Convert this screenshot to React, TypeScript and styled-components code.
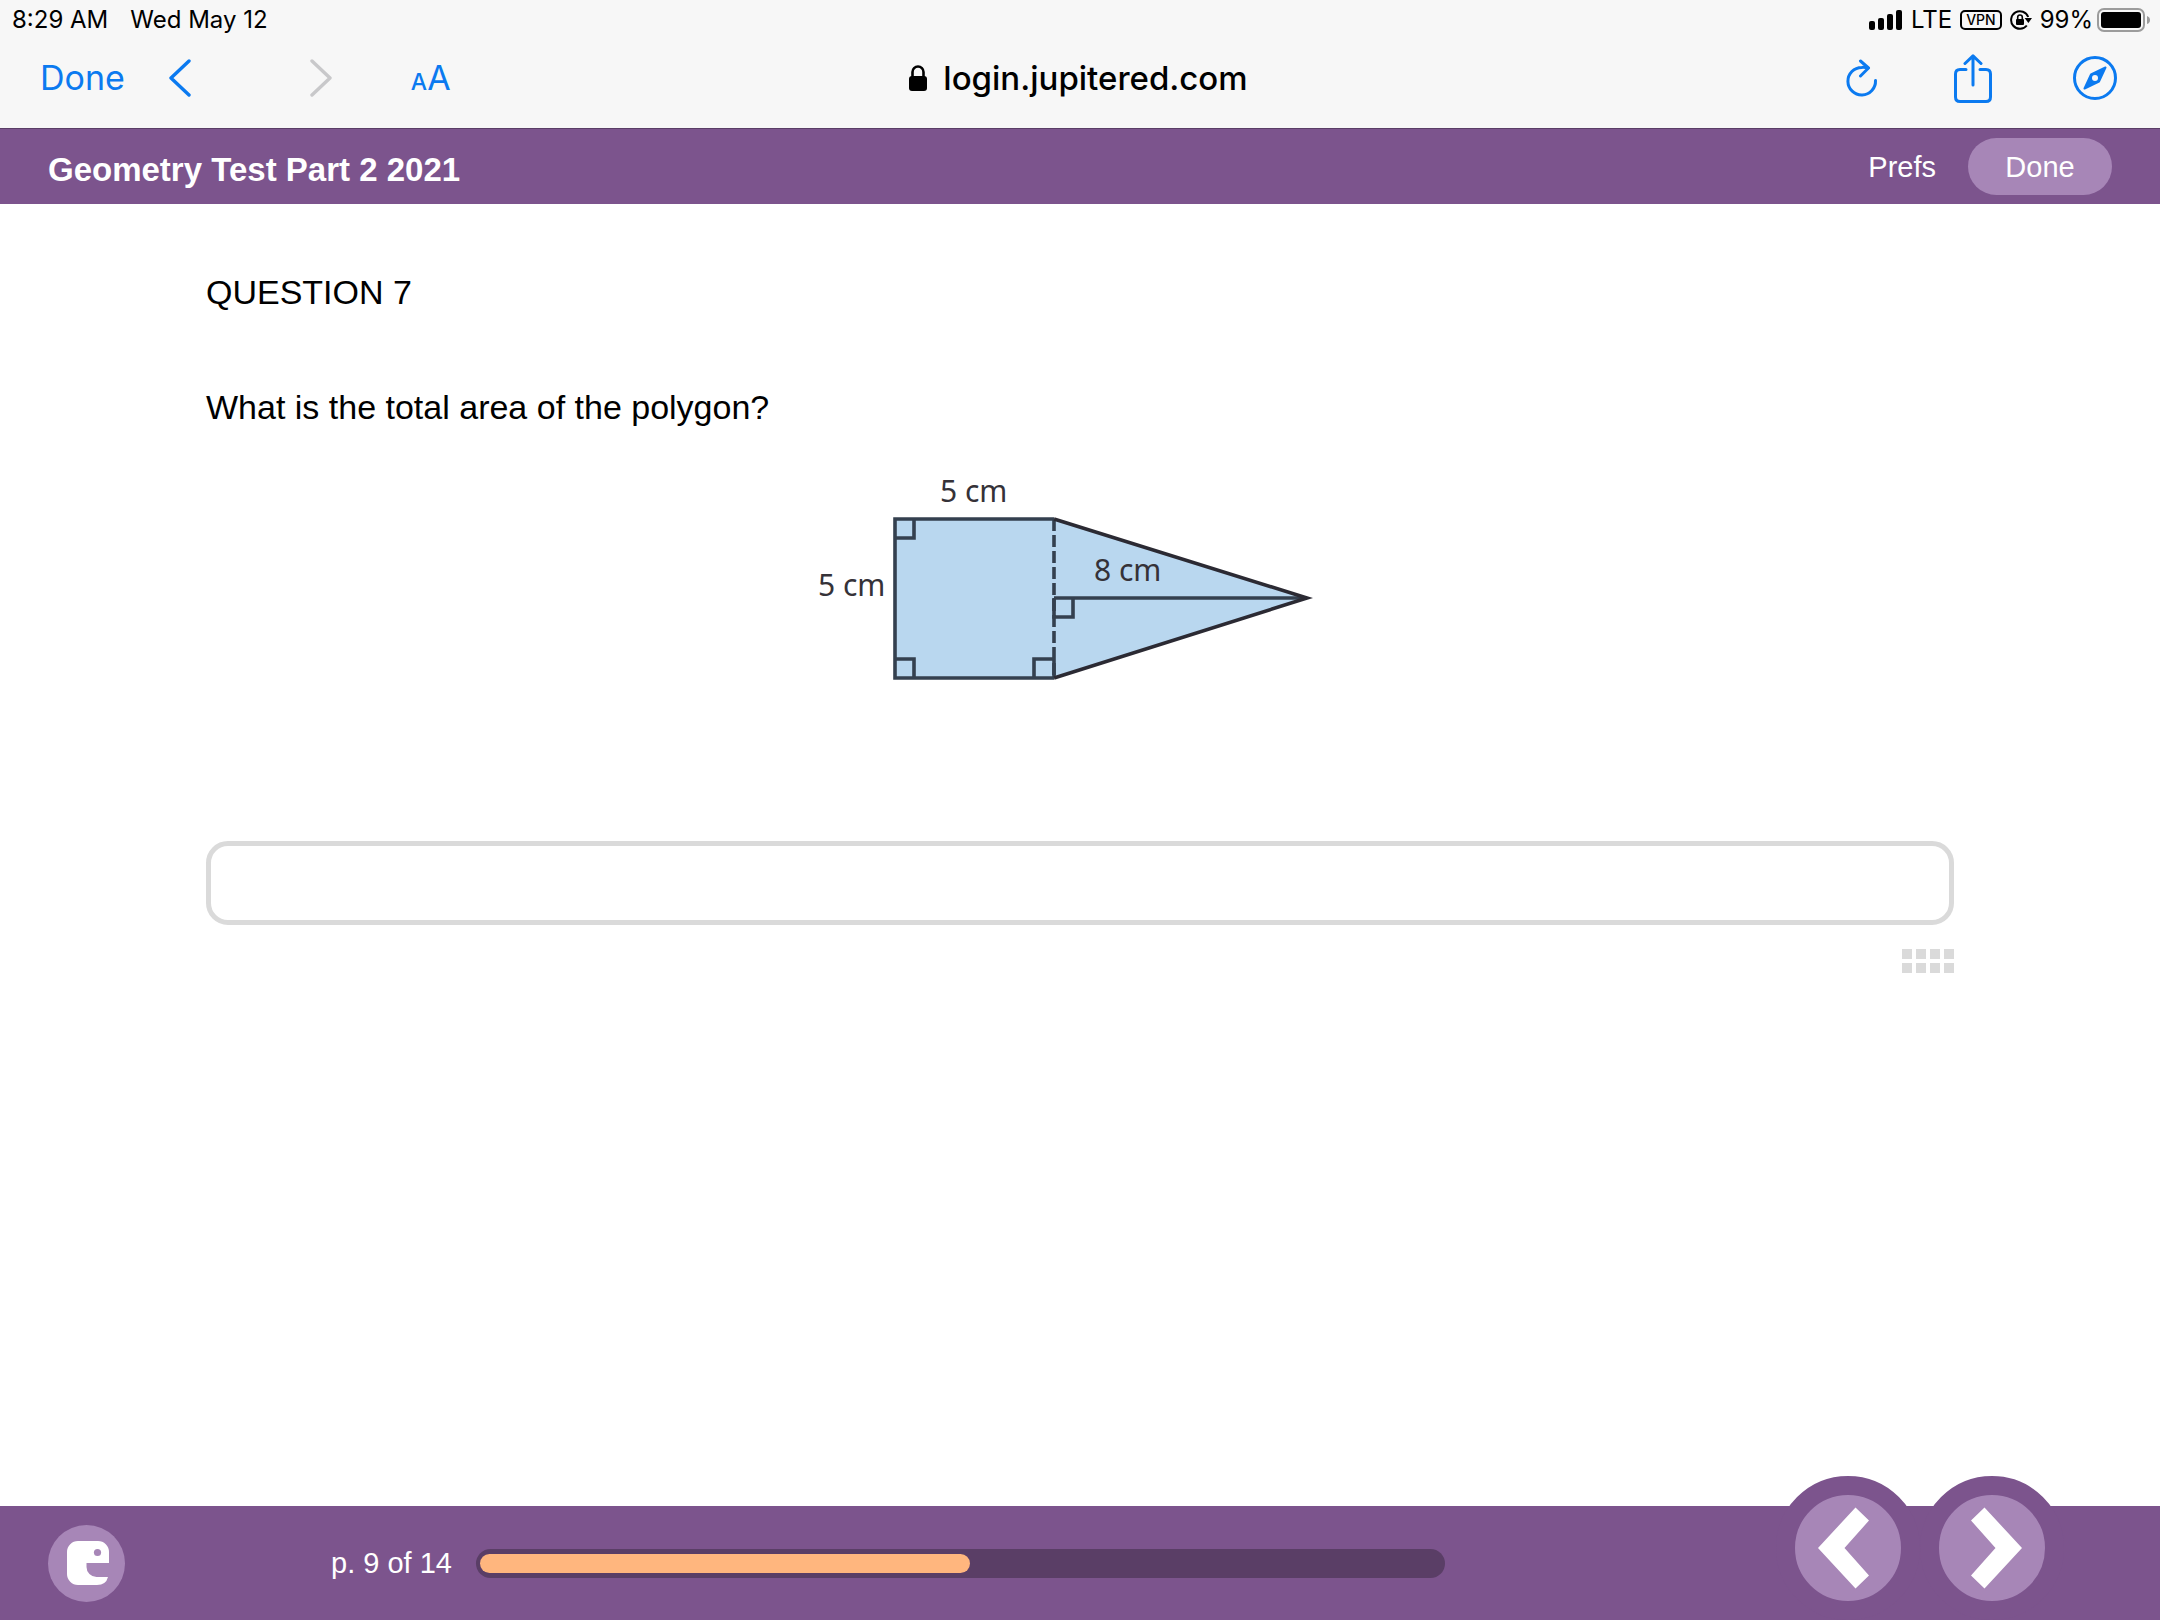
import React, { useState } from "react";
import styled, { createGlobalStyle } from "styled-components";

const color = {
  chrome: "#f7f7f7",
  blue: "#0b7af0",
  disabled: "#c8c8ca",
  purple: "#7c548d",
  lilac: "#a786b7",
  plum: "#5a3e66",
  orange: "#ffb67e",
  line: "#dadada",
};

const systemFont = `Inter, "Liberation Sans", sans-serif`;
const pageFont = `"Liberation Sans", Arial, sans-serif`;

const GlobalStyle = createGlobalStyle`
  * { box-sizing: border-box; }
  body { margin: 0; background: #fff; color: #000; font-family: ${pageFont}; }
  button { border: 0; padding: 0; background: none; font: inherit; color: inherit; cursor: pointer; }
  a { color: inherit; text-decoration: none; }
  svg { display: block; }
`;

const Page = styled.div`
  display: flex;
  flex-direction: column;
  min-height: 100vh;
`;

const BrowserChrome = styled.header`
  background: ${color.chrome};
  font-family: ${systemFont};
`;

const StatusBar = styled.div`
  display: flex;
  justify-content: space-between;
  align-items: center;
  height: 40px;
  padding: 0 10px 0 12px;
  font-size: 24px;
  line-height: 28px;
`;

const StatusGroup = styled.div<{ $gap: number }>`
  display: flex;
  align-items: center;
  gap: ${(p) => p.$gap}px;
`;

const VpnBadge = styled.span`
  display: flex;
  align-items: center;
  height: 20px;
  padding: 0 4px;
  border: 2px solid #000;
  border-radius: 5px;
  font-size: 14px;
  line-height: 16px;
  font-weight: 500;
`;

const BatteryGroup = styled.div`
  display: flex;
  align-items: center;
  gap: 4px;
`;

const Toolbar = styled.nav`
  display: grid;
  grid-template-columns: 1fr auto 1fr;
  align-items: center;
  height: 88px;
  padding: 0 43px 12px 40px;
  font-size: 34px;
  line-height: 40px;
`;

const ToolGroup = styled.div<{ $end?: boolean }>`
  display: flex;
  align-items: center;
  justify-content: ${(p) => (p.$end ? "flex-end" : "flex-start")};
`;

const ToolButton = styled.button<{ $space?: number }>`
  margin-left: ${(p) => p.$space ?? 0}px;
  color: ${color.blue};
  &:disabled {
    color: ${color.disabled};
    cursor: default;
  }
`;

const SmallLetter = styled.span`
  font-size: 23px;
  font-weight: 500;
  line-height: 24px;
`;

const Address = styled.div`
  display: flex;
  align-items: center;
  gap: 16px;
  font-size: 33px;
  font-weight: 500;
`;

const TestHeader = styled.header`
  display: flex;
  align-items: center;
  justify-content: space-between;
  height: 76px;
  padding: 0 48px;
  border-top: 1px solid ${color.plum};
  background: ${color.purple};
  color: #fff;
`;

const TestTitle = styled.h1`
  margin: 0;
  padding-top: 6px;
  font-size: 33px;
  line-height: 40px;
`;

const HeaderActions = styled.div`
  display: flex;
  align-items: center;
  gap: 32px;
  font-size: 29px;
  line-height: 32px;
`;

const Pill = styled.button`
  width: 144px;
  height: 57px;
  border-radius: 29px;
  background: ${color.lilac};
`;

const Main = styled.main`
  display: flex;
  flex: 1;
  flex-direction: column;
  padding: 68px 206px;
  font-size: 34px;
  line-height: 40px;
`;

const QuestionNumber = styled.h2`
  margin: 0 0 75px;
  font-size: inherit;
  font-weight: 400;
`;

const QuestionText = styled.label`
  align-self: flex-start;
`;

const Figure = styled.figure`
  display: flex;
  justify-content: center;
  margin: 43px 0 151px;
`;

const AnswerInput = styled.input`
  width: 100%;
  height: 84px;
  padding: 0 24px;
  border: 5px solid ${color.line};
  border-radius: 22px;
  background: #fff;
  font: inherit;
  outline: none;
`;

const KeypadButton = styled.button`
  display: grid;
  grid-template-columns: repeat(4, 10px);
  align-self: flex-end;
  gap: 4px;
  margin-top: 24px;
`;

const KeypadDot = styled.span`
  height: 10px;
  background: ${color.line};
`;

const Footer = styled.footer`
  display: flex;
  align-items: center;
  height: 114px;
  padding: 0 96px 0 48px;
  background: ${color.purple};
  color: #fff;
  font-size: 29px;
  line-height: 32px;
`;

const LogoButton = styled.button`
  display: flex;
  align-items: center;
  justify-content: center;
  width: 77px;
  height: 77px;
  border-radius: 50%;
  background: ${color.lilac};
`;

const PageCount = styled.span`
  margin-left: 206px;
  white-space: nowrap;
`;

const Track = styled.div`
  flex: 1;
  height: 29px;
  margin: 0 331px 0 24px;
  padding: 5px 4px;
  border-radius: 15px;
  background: ${color.plum};
`;

const Fill = styled.div`
  height: 100%;
  border-radius: 10px;
  background: ${color.orange};
`;

const Pager = styled.nav`
  display: flex;
  align-self: flex-end;
`;

const PagerButton = styled.button`
  display: flex;
  align-items: center;
  justify-content: center;
  width: 144px;
  height: 144px;
  border: 19px solid ${color.purple};
  border-radius: 50%;
  background: ${color.lilac};
`;

const SignalIcon = () => (
  <svg width="34" height="20" viewBox="0 0 34 20" aria-hidden="true">
    <rect x="0" y="11" width="6" height="9" rx="2" />
    <rect x="9" y="8" width="6" height="12" rx="2" />
    <rect x="18" y="4" width="6" height="16" rx="2" />
    <rect x="27" y="0" width="6" height="20" rx="2" />
  </svg>
);

const RotationLockIcon = () => (
  <svg width="22" height="20" viewBox="0 0 22 20" fill="none" stroke="#000" aria-hidden="true">
    <path d="M18.200 7A8.800 8.800 0 1 0 16.800 15.500" strokeWidth="2" />
    <path d="M14.600 8H22L18.400 13Z" fill="#000" stroke="none" />
    <rect x="6" y="9" width="8" height="6" rx="1" fill="#000" stroke="none" />
    <path d="M7.700 9.500V7.300a2.300 2.300 0 0 1 4.600 0V9.500" strokeWidth="1.600" />
  </svg>
);

const BatteryIcon = () => (
  <svg width="53" height="24" viewBox="0 0 53 24" aria-hidden="true">
    <rect x="1" y="1" width="46" height="22" rx="6" fill="none" stroke="#9c9c9c" strokeWidth="2" />
    <rect x="4" y="4" width="40" height="16" rx="3" />
    <path d="M50 8Q53 9 53 12T50 16Z" fill="#9c9c9c" />
  </svg>
);

const ThinChevron = ({ forward = false }: { forward?: boolean }) => (
  <svg width="23" height="38" viewBox="0 0 23 38" fill="none" stroke="currentColor" strokeWidth="3.400" strokeLinecap="round" strokeLinejoin="round" aria-hidden="true">
    <path d={forward ? "M3 2L21 19L3 36" : "M20 2L2 19L20 36"} />
  </svg>
);

const PadlockIcon = () => (
  <svg width="18" height="27" viewBox="0 0 18 27" aria-hidden="true">
    <rect x="0" y="11" width="18" height="15" rx="3" />
    <path d="M3.500 12V7a5.500 5.500 0 0 1 11 0V12" fill="none" stroke="#000" strokeWidth="2.600" />
  </svg>
);

const ReloadIcon = () => (
  <svg width="32" height="38" viewBox="0 0 32 38" fill="none" stroke="currentColor" strokeWidth="3" strokeLinecap="round" strokeLinejoin="round" aria-hidden="true">
    <path d="M29.500 21.500A13.800 13.800 0 1 1 15.700 8.400Q19 8.200 22 9" />
    <path d="M14.500 2L22.500 9L14.500 17" />
  </svg>
);

const ShareIcon = () => (
  <svg width="38" height="49" viewBox="0 0 38 49" fill="none" stroke="currentColor" strokeWidth="3" strokeLinecap="round" strokeLinejoin="round" aria-hidden="true">
    <path d="M12 15.500H6Q1.500 15.500 1.500 20V43Q1.500 47.500 6 47.500H32Q36.500 47.500 36.500 43V20Q36.500 15.500 32 15.500H26" />
    <path d="M19 31V2M11 9.500L19 1.800L27 9.500" />
  </svg>
);

const CompassIcon = () => (
  <svg width="44" height="44" viewBox="0 0 44 44" aria-hidden="true">
    <circle cx="22" cy="22" r="20.500" fill="none" stroke="currentColor" strokeWidth="3" />
    <path d="M32.500 11.500L26 25.500L11.500 32.500L18 18.500Z" fill="currentColor" stroke="currentColor" strokeWidth="2" strokeLinejoin="round" />
    <circle cx="22" cy="22" r="3" fill={color.chrome} />
  </svg>
);

const LogoIcon = () => (
  <svg width="44" height="44" viewBox="-2 0 44 44" aria-hidden="true">
    <path
      fill="#fff"
      d="M11 0H31A11 11 0 0 1 42 11V22H19.500V26A10 10 0 0 0 29.500 36H41Q39 44 30 44H11A11 11 0 0 1 0 33V11A11 11 0 0 1 11 0Z"
    />
    <circle cx="30.500" cy="11.500" r="3.600" fill={color.lilac} />
  </svg>
);

const BoldChevron = ({ forward = false }: { forward?: boolean }) => (
  <svg width="62" height="82" viewBox={forward ? "-8 0 62 82" : "0 0 62 82"} fill="#fff" aria-hidden="true">
    <path d={forward ? "M15.500 .5L53 41L15.500 81.500L2 68.500L26.500 41L2 13.500Z" : "M38.500 .5L1 41L38.500 81.500L52 68.500L27.500 41L52 13.500Z"} />
  </svg>
);

const FigureLabel = styled.text`
  fill: #353238;
  font-family: "Noto Sans", "Open Sans", sans-serif;
  font-size: 30px;
`;

const PolygonFigure = () => (
  <svg width="520" height="220" viewBox="820 470 520 220" overflow="visible" role="img" aria-label="Square joined to a triangle">
    <path d="M895 519H1054L1307 598L1054 678H895Z" fill="#b9d7ef" />
    <g fill="none" stroke="#34404f" strokeWidth="3.600">
      <path d="M1054 519H895V678H1054" />
      <path d="M1054 598H1302" />
      <path d="M1054 519V678" strokeDasharray="12 4" />
      <path d="M914 520V538H896M896 659H914V677M1053 659H1034V677M1054 598V617H1073V599" />
      <path d="M1054 659V678" />
    </g>
    <path d="M1054 519L1307 598L1054 678" fill="none" stroke="#2b2a33" strokeWidth="3.600" />
    <FigureLabel x="940" y="502">5 cm</FigureLabel>
    <FigureLabel x="818" y="596">5 cm</FigureLabel>
    <FigureLabel x="1094" y="581">8 cm</FigureLabel>
  </svg>
);

export default function App() {
  const [answer, setAnswer] = useState("");
  const progress = 51;

  return (
    <Page>
      <GlobalStyle />
      <BrowserChrome>
        <StatusBar>
          <StatusGroup $gap={22}>
            <span>8:29 AM</span>
            <span>Wed May 12</span>
          </StatusGroup>
          <StatusGroup $gap={8}>
            <SignalIcon />
            <span>LTE</span>
            <VpnBadge>VPN</VpnBadge>
            <RotationLockIcon />
            <BatteryGroup>
              <span>99%</span>
              <BatteryIcon />
            </BatteryGroup>
          </StatusGroup>
        </StatusBar>
        <Toolbar aria-label="Browser">
          <ToolGroup>
            <ToolButton>Done</ToolButton>
            <ToolButton $space={44} aria-label="Back">
              <ThinChevron />
            </ToolButton>
            <ToolButton $space={117} aria-label="Forward" disabled>
              <ThinChevron forward />
            </ToolButton>
            <ToolButton $space={79} aria-label="Text size">
              <SmallLetter>A</SmallLetter>A
            </ToolButton>
          </ToolGroup>
          <Address>
            <PadlockIcon />
            <span>login.jupitered.com</span>
          </Address>
          <ToolGroup $end>
            <ToolButton aria-label="Reload">
              <ReloadIcon />
            </ToolButton>
            <ToolButton $space={76} aria-label="Share">
              <ShareIcon />
            </ToolButton>
            <ToolButton $space={81} aria-label="Open in browser">
              <CompassIcon />
            </ToolButton>
          </ToolGroup>
        </Toolbar>
      </BrowserChrome>

      <TestHeader>
        <TestTitle>Geometry Test Part 2 2021</TestTitle>
        <HeaderActions>
          <a href="#prefs">Prefs</a>
          <Pill>Done</Pill>
        </HeaderActions>
      </TestHeader>

      <Main>
        <QuestionNumber>QUESTION 7</QuestionNumber>
        <QuestionText htmlFor="answer">What is the total area of the polygon?</QuestionText>
        <Figure>
          <PolygonFigure />
        </Figure>
        <AnswerInput id="answer" type="text" autoComplete="off" value={answer} onChange={(e) => setAnswer(e.target.value)} />
        <KeypadButton aria-label="Symbol keypad">
          {Array.from({ length: 8 }, (_, i) => (
            <KeypadDot key={i} />
          ))}
        </KeypadButton>
      </Main>

      <Footer>
        <LogoButton aria-label="Home">
          <LogoIcon />
        </LogoButton>
        <PageCount>p. 9 of 14</PageCount>
        <Track role="progressbar" aria-label="Test progress" aria-valuenow={progress} aria-valuemin={0} aria-valuemax={100}>
          <Fill style={{ width: `${progress}%` }} />
        </Track>
        <Pager aria-label="Questions">
          <PagerButton aria-label="Previous question">
            <BoldChevron />
          </PagerButton>
          <PagerButton aria-label="Next question">
            <BoldChevron forward />
          </PagerButton>
        </Pager>
      </Footer>
    </Page>
  );
}
